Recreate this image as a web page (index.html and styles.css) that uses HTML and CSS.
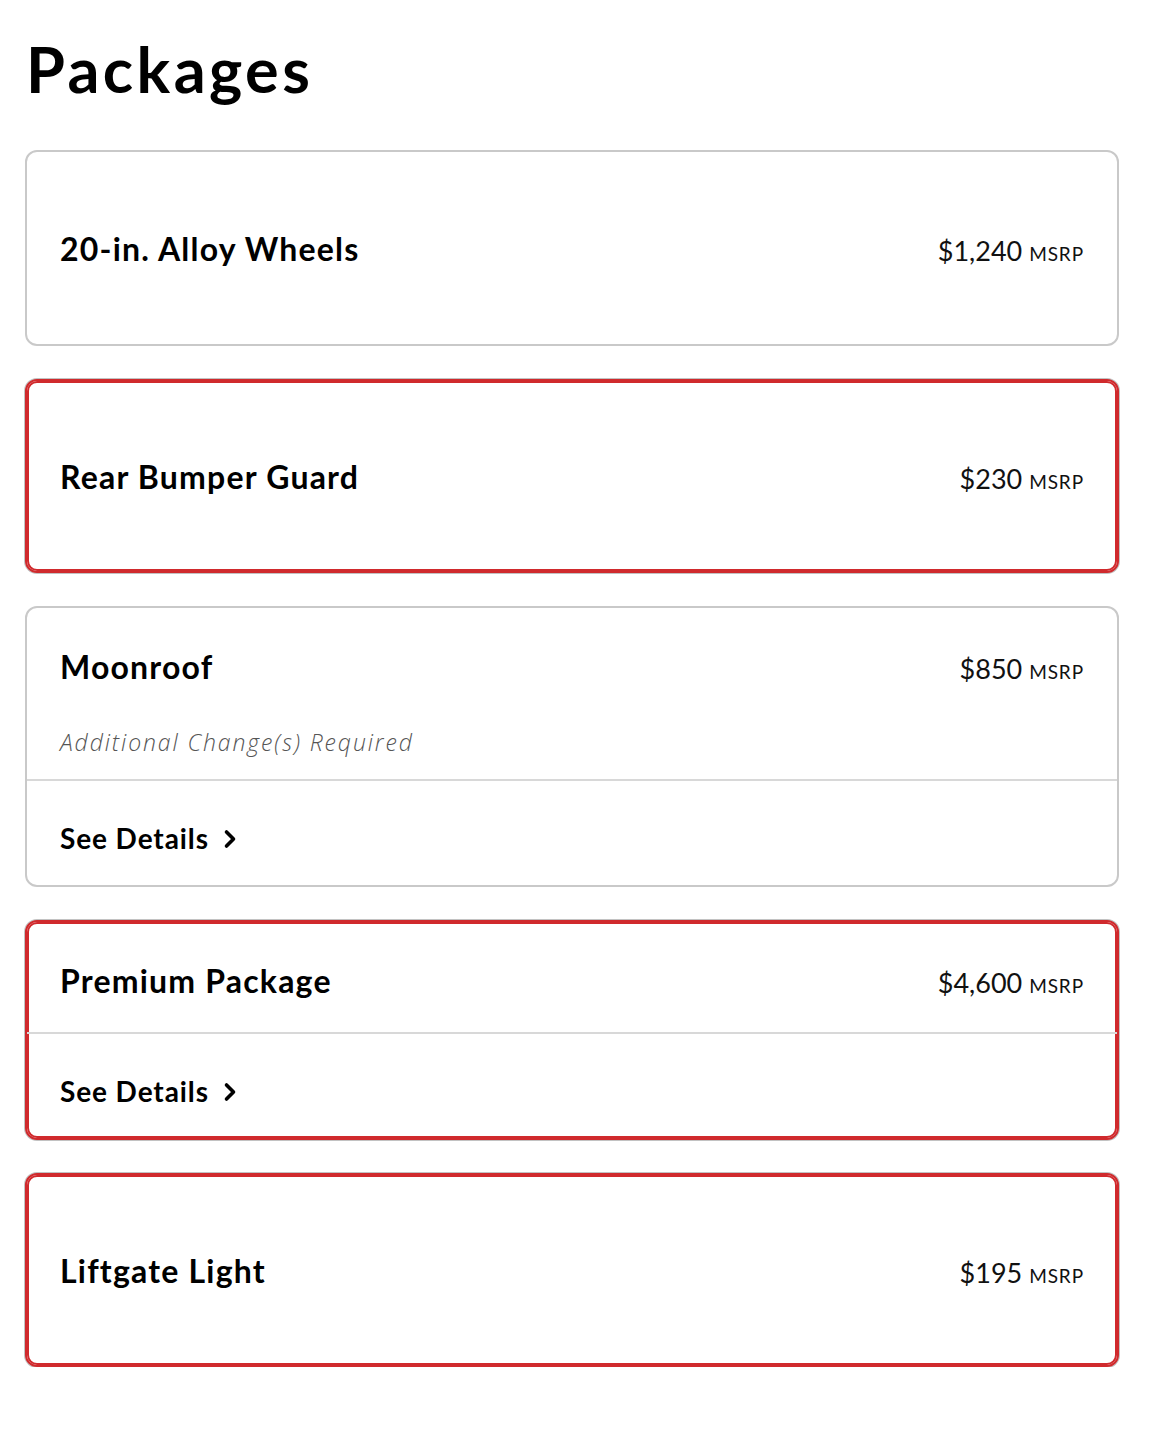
FILE: index.html
```html
<!DOCTYPE html>
<html>
<head>
<meta charset="utf-8">
<link rel="stylesheet" href="styles.css">
</head>
<body>
<main class="page">
  <h1 class="title">Packages</h1>
  <div class="list">
    <div class="card single">
      <div class="row">
        <span class="name">20-in. Alloy Wheels</span>
        <span class="price">$1,240 <span class="msrp">MSRP</span></span>
      </div>
    </div>
    <div class="card single selected">
      <div class="row">
        <span class="name">Rear Bumper Guard</span>
        <span class="price">$230 <span class="msrp">MSRP</span></span>
      </div>
    </div>
    <div class="card">
      <div class="head">
        <div class="row">
          <span class="name">Moonroof</span>
          <span class="price">$850 <span class="msrp">MSRP</span></span>
        </div>
        <div class="note">Additional Change(s) Required</div>
      </div>
      <div class="foot">
        <span class="details">See Details</span>
        <svg class="chev" width="15" height="20" viewBox="0 0 15 20"><polyline points="3.5,3 10.5,10 3.5,17" fill="none" stroke="#000" stroke-width="3.6" stroke-linecap="round" stroke-linejoin="round"/></svg>
      </div>
    </div>
    <div class="card selected">
      <div class="head plain">
        <div class="row">
          <span class="name">Premium Package</span>
          <span class="price">$4,600 <span class="msrp">MSRP</span></span>
        </div>
      </div>
      <div class="foot">
        <span class="details">See Details</span>
        <svg class="chev" width="15" height="20" viewBox="0 0 15 20"><polyline points="3.5,3 10.5,10 3.5,17" fill="none" stroke="#000" stroke-width="3.6" stroke-linecap="round" stroke-linejoin="round"/></svg>
      </div>
    </div>
    <div class="card single selected">
      <div class="row">
        <span class="name">Liftgate Light</span>
        <span class="price">$195 <span class="msrp">MSRP</span></span>
      </div>
    </div>
  </div>
</main>
</body>
</html>
```
FILE: styles.css
```css
* { box-sizing: border-box; }
html, body { margin: 0; padding: 0; background: #fff; }
body { font-family: Lato, "Open Sans", sans-serif; color: #000; }
.page { padding: 26px 41px 0 25px; }
.title {
  margin: 0 0 0 1px;
  font-size: 63px;
  font-weight: 700;
  line-height: 86px;
  letter-spacing: 3.4px;
}
.list {
  margin-top: 38px;
  display: flex;
  flex-direction: column;
  gap: 33px;
}
.card {
  border: 2px solid #c9c9c9;
  border-radius: 12px;
  background: #fff;
}
.card.selected {
  border-color: #d02a2d;
  box-shadow: 0 0 0 1px #c2c2c2, inset 0 0 0 2px #d02a2d;
}
.card.single { padding: 79px 33px 77px 33px; }
.card.single.selected { padding: 78px 33px 76px 33px; }
.row {
  display: flex;
  justify-content: space-between;
  align-items: center;
  height: 36px;
}
.name {
  font-size: 32px;
  font-weight: 700;
  letter-spacing: 1.2px;
  line-height: 36px;
}
.price {
  font-size: 27px;
  font-weight: 400;
  color: #111;
  line-height: 36px;
  margin-top: 3px;
}
.msrp { font-size: 19px; letter-spacing: 0.9px; line-height: 1; }
.head { padding: 41px 33px 22px 33px; border-bottom: 2px solid #d8d8d8; }
.head.plain { padding-bottom: 33px; }
.note {
  margin-top: 42px;
  font-family: "Open Sans", Lato, sans-serif;
  font-size: 23px;
  font-weight: 300;
  font-style: italic;
  color: #555;
  line-height: 30px;
  height: 30px;
  letter-spacing: 1.9px;
}
.foot {
  padding: 42px 33px 33px 33px;
  display: flex;
  align-items: center;
  gap: 14px;
  height: 104px;
}
.details {
  font-size: 28px;
  font-weight: 700;
  letter-spacing: 0.9px;
  line-height: 28px;
}
.chev { display: block; margin-top: 2px; }
```
